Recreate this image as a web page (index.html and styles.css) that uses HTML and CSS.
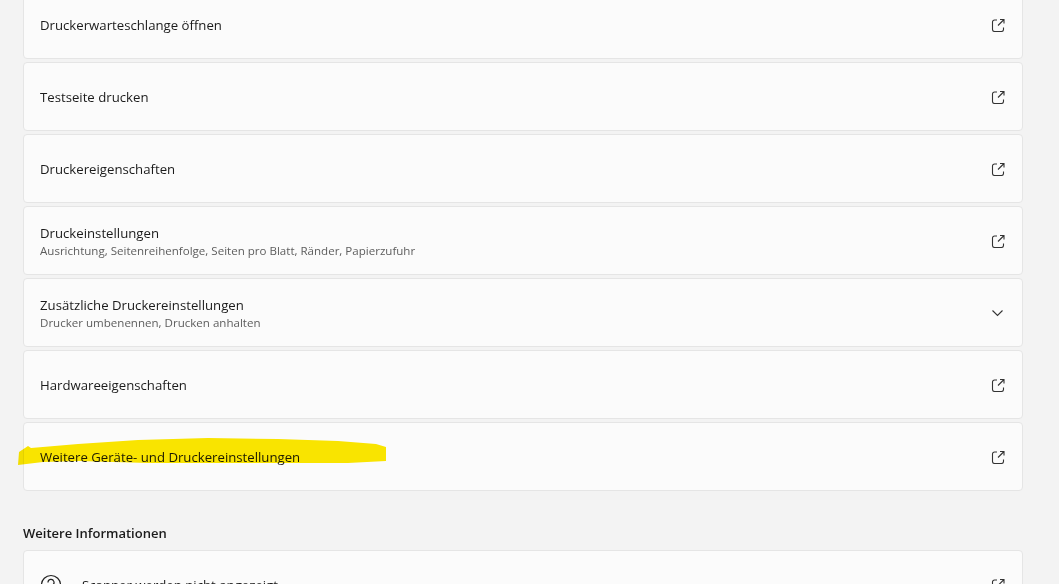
FILE: index.html
```html
<!DOCTYPE html>
<html lang="de">
<head>
<meta charset="utf-8">
<title>Druckereinstellungen</title>
<link rel="stylesheet" href="styles.css">
</head>
<body>
<main class="page">
  <section class="list">
    <div class="card"><div class="text"><div class="title">Druckerwarteschlange öffnen</div></div>
      <svg class="icon" viewBox="0 0 14 14"><path d="M6 2H3.500A2 2 0 0 0 1.500 4V11.500A2 2 0 0 0 3.500 13.500H10.500A2 2 0 0 0 12.500 11.500V9.500M9 1.500H13V5.500M13 1.500L7 7.500"/></svg></div>
    <div class="card"><div class="text"><div class="title">Testseite drucken</div></div>
      <svg class="icon" viewBox="0 0 14 14"><path d="M6 2H3.500A2 2 0 0 0 1.500 4V11.500A2 2 0 0 0 3.500 13.500H10.500A2 2 0 0 0 12.500 11.500V9.500M9 1.500H13V5.500M13 1.500L7 7.500"/></svg></div>
    <div class="card"><div class="text"><div class="title">Druckereigenschaften</div></div>
      <svg class="icon" viewBox="0 0 14 14"><path d="M6 2H3.500A2 2 0 0 0 1.500 4V11.500A2 2 0 0 0 3.500 13.500H10.500A2 2 0 0 0 12.500 11.500V9.500M9 1.500H13V5.500M13 1.500L7 7.500"/></svg></div>
    <div class="card"><div class="text"><div class="title">Druckeinstellungen</div><div class="sub">Ausrichtung, Seitenreihenfolge, Seiten pro Blatt, Ränder, Papierzufuhr</div></div>
      <svg class="icon" viewBox="0 0 14 14"><path d="M6 2H3.500A2 2 0 0 0 1.500 4V11.500A2 2 0 0 0 3.500 13.500H10.500A2 2 0 0 0 12.500 11.500V9.500M9 1.500H13V5.500M13 1.500L7 7.500"/></svg></div>
    <div class="card"><div class="text"><div class="title">Zusätzliche Druckereinstellungen</div><div class="sub">Drucker umbenennen, Drucken anhalten</div></div>
      <svg class="icon" viewBox="0 0 14 14"><path d="M1.500 4.500L6.500 9.500L11.500 4.500"/></svg></div>
    <div class="card"><div class="text"><div class="title">Hardwareeigenschaften</div></div>
      <svg class="icon" viewBox="0 0 14 14"><path d="M6 2H3.500A2 2 0 0 0 1.500 4V11.500A2 2 0 0 0 3.500 13.500H10.500A2 2 0 0 0 12.500 11.500V9.500M9 1.500H13V5.500M13 1.500L7 7.500"/></svg></div>
    <div class="card"><div class="text"><div class="title">Weitere Geräte- und Druckereinstellungen</div></div>
      <svg class="icon" viewBox="0 0 14 14"><path d="M6 2H3.500A2 2 0 0 0 1.500 4V11.500A2 2 0 0 0 3.500 13.500H10.500A2 2 0 0 0 12.500 11.500V9.500M9 1.500H13V5.500M13 1.500L7 7.500"/></svg>
      <svg class="marker" viewBox="0 0 370 30"><path d="M0 27L1 14L10 8L13 10L60 6L120 2L190 0L260 1L320 3L358 6L368 9L368 23L330 25L230 25L130 25L60 23L25 24Z"/></svg>
    </div>
  </section>
  <h2 class="heading">Weitere Informationen</h2>
  <section class="list">
    <div class="card">
      <svg class="help" viewBox="0 0 22 22"><circle cx="11" cy="11" r="9.500"/><path d="M8 8.500A3 3 0 1 1 12.500 11C11.500 11.600 11 12.200 11 13.500"/></svg>
      <div class="text"><div class="title">Scanner werden nicht angezeigt</div></div>
      <svg class="icon" viewBox="0 0 14 14"><path d="M6 2H3.500A2 2 0 0 0 1.500 4V11.500A2 2 0 0 0 3.500 13.500H10.500A2 2 0 0 0 12.500 11.500V9.500M9 1.500H13V5.500M13 1.500L7 7.500"/></svg>
    </div>
  </section>
</main>
</body>
</html>
```
FILE: styles.css
```css
html, body {
  margin: 0;
  height: 584px;
  overflow: hidden;
  background: #f3f3f3;
}
.page {
  margin-top: -10px;
  padding: 0 36px 0 23px;
  font-family: "Open Sans", "Noto Sans", sans-serif;
  color: #1b1b1b;
}
.list {
  display: flex;
  flex-direction: column;
  gap: 3px;
}
.card {
  position: relative;
  box-sizing: border-box;
  height: 69px;
  display: flex;
  align-items: center;
  padding: 0 17px 0 16px;
  background: #fbfbfb;
  border: 1px solid #e5e5e5;
  border-radius: 4px;
}
.text {
  flex: 1;
  min-width: 0;
}
.title {
  font-size: 13.200px;
  line-height: 18px;
  white-space: nowrap;
}
.sub {
  font-size: 11.550px;
  line-height: 18px;
  height: 16px;
  color: #5d5d5d;
  white-space: nowrap;
}
.icon {
  width: 14px;
  height: 14px;
  flex: none;
  fill: none;
  stroke: #333;
  stroke-width: 1.100;
}
.marker {
  position: absolute;
  left: -6px;
  top: 15px;
  width: 370px;
  height: 30px;
  fill: #fde800;
  mix-blend-mode: multiply;
  pointer-events: none;
}
.heading {
  margin: 33px 0 7px;
  font-size: 13px;
  line-height: 19px;
  font-weight: 600;
}
.help {
  width: 22px;
  height: 22px;
  flex: none;
  margin-right: 20px;
  fill: none;
  stroke: #222;
  stroke-width: 1.200;
}
```
